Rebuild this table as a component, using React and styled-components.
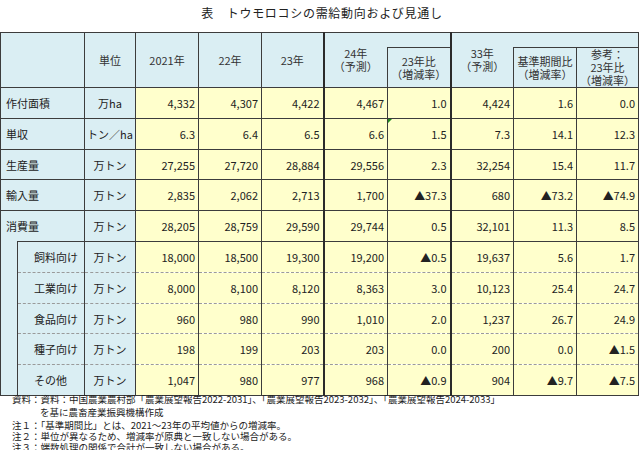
import React from 'react';
import styled, { createGlobalStyle } from 'styled-components';

const GlobalStyle = createGlobalStyle`
  html, body {
    margin: 0;
    padding: 0;
    background: #ffffff;
  }
  body {
    font-family: 'Noto Sans CJK JP', 'Noto Sans', sans-serif;
    color: #222222;
  }
`;

const line = '#3c3c3c';
const thick = '#2a2a2a';
const blue = '#daeef3';
const yellow = '#ffffcc';

const Page = styled.div`
  width: 640px;
  height: 450px;
  overflow: hidden;
`;

const Title = styled.div`
  height: 32px;
  padding-top: 6px;
  box-sizing: border-box;
  text-align: center;
  font-size: 12px;
  line-height: 14px;
  letter-spacing: 0.7px;
  padding-left: 4px;
  color: #222;
`;

const Table = styled.table`
  border-collapse: collapse;
  table-layout: fixed;
  width: 639px;
  font-size: 11px;
  line-height: 14px;
  border: 1px solid ${line};
`;

const HeadRow = styled.tr`
  height: ${p => p.$h}px;
`;

const Row = styled.tr`
  height: ${p => p.$h || 31}px;
`;

const Head = styled.th`
  background: ${blue};
  font-weight: normal;
  color: #333;
  line-height: 13px;
  text-align: center;
  padding: 0;
  border: 1px solid ${line};
  ${p => p.$open && 'border-right: none;'}
  ${p => p.$gap && 'border-left: none;'}
  ${p => p.$thick && `border-right: 2px solid ${thick};`}
`;

const subBorders = p => {
  if (p.$sub === 'first') return 'border-bottom: 1px dashed #9a9a9a;';
  if (p.$sub === 'mid') return 'border-top: 1px dashed #9a9a9a; border-bottom: 1px dashed #9a9a9a;';
  if (p.$sub === 'last') return 'border-top: 1px dashed #9a9a9a;';
  return '';
};

const Cell = styled.td`
  border: 1px solid ${line};
  padding: 0 3px;
  white-space: nowrap;
  ${subBorders}
  ${p => p.$thick && `border-right: 2px solid ${thick};`}
`;

const Label = styled(Cell)`
  background: ${blue};
  text-align: left;
  padding-left: ${p => (p.$sub ? '16px' : '5px')};
  ${p => p.$open && 'border-bottom: none;'}
`;

const Indent = styled.td`
  background: ${blue};
  border: 1px solid ${line};
  border-top: none;
  padding: 0;
`;

const Unit = styled(Cell)`
  background: ${blue};
  text-align: center;
  padding: 0;
`;

const Num = styled(Cell)`
  background: ${yellow};
  text-align: right;
  position: relative;

  ${p =>
    p.$flag &&
    `&::before {
      content: '';
      position: absolute;
      left: 0;
      top: 0;
      border-top: 4px solid #1f8a1f;
      border-right: 4px solid transparent;
    }`}
`;

const Notes = styled.div`
  margin-top: -2px;
  padding-left: 12px;
  font-size: 9.5px;
  color: #222;
`;

const NoteLine = styled.div`
  height: 11px;
  line-height: 11px;
  padding-left: ${p => (p.$indent ? '28px' : '0')};
  margin-bottom: ${p => p.$mb || 0}px;
  white-space: nowrap;
`;

const widths = [17, 67, 51, 63, 63, 62, 64, 63, 63, 63, 62];

const main = [
  { label: '作付面積', unit: '万ha', h: 31, v: ['4,332', '4,307', '4,422', '4,467', '1.0', '4,424', '1.6', '0.0'] },
  { label: '単収', unit: 'トン／ha', h: 31, v: ['6.3', '6.4', '6.5', '6.6', '1.5', '7.3', '14.1', '12.3'], flag: true },
  { label: '生産量', unit: '万トン', h: 30, v: ['27,255', '27,720', '28,884', '29,556', '2.3', '32,254', '15.4', '11.7'] },
  { label: '輸入量', unit: '万トン', h: 31, v: ['2,835', '2,062', '2,713', '1,700', '▲37.3', '680', '▲73.2', '▲74.9'] },
];

const total = { label: '消費量', unit: '万トン', h: 31, v: ['28,205', '28,759', '29,590', '29,744', '0.5', '32,101', '11.3', '8.5'] };

const subs = [
  { label: '飼料向け', h: 31, v: ['18,000', '18,500', '19,300', '19,200', '▲0.5', '19,637', '5.6', '1.7'] },
  { label: '工業向け', h: 31, v: ['8,000', '8,100', '8,120', '8,363', '3.0', '10,123', '25.4', '24.7'] },
  { label: '食品向け', h: 30, v: ['960', '980', '990', '1,010', '2.0', '1,237', '26.7', '24.9'] },
  { label: '種子向け', h: 31, v: ['198', '199', '203', '203', '0.0', '200', '0.0', '▲1.5'] },
  { label: 'その他', h: 31, v: ['1,047', '980', '977', '968', '▲0.9', '904', '▲9.7', '▲7.5'] },
];

// thick dividers after 23年 and after 23年比
const isThick = i => i === 2 || i === 4;

function Values({ v, sub, flag }) {
  return v.map((x, i) => (
    <Num key={i} $thick={isThick(i)} $sub={sub} $flag={flag && i === 4}>
      {x}
    </Num>
  ));
}

const subPos = i => (i === 0 ? 'first' : i === subs.length - 1 ? 'last' : 'mid');

export default function App() {
  return (
    <Page>
      <GlobalStyle />
      <Title>表　トウモロコシの需給動向および見通し</Title>
      <Table>
        <colgroup>
          {widths.map((w, i) => (
            <col key={i} style={{ width: w }} />
          ))}
        </colgroup>
        <thead>
          <HeadRow $h={15}>
            <Head colSpan={2} rowSpan={2} />
            <Head rowSpan={2}>単位</Head>
            <Head rowSpan={2}>2021年</Head>
            <Head rowSpan={2}>22年</Head>
            <Head rowSpan={2} $thick>23年</Head>
            <Head rowSpan={2} $open>
              24年
              <br />
              （予測）
            </Head>
            <Head $gap $thick />
            <Head rowSpan={2} $open>
              33年
              <br />
              （予測）
            </Head>
            <Head colSpan={2} $gap />
          </HeadRow>
          <HeadRow $h={37}>
            <Head $thick>
              23年比
              <br />
              （増減率）
            </Head>
            <Head>
              基準期間比
              <br />
              （増減率）
            </Head>
            <Head>
              参考：
              <br />
              23年比
              <br />
              （増減率）
            </Head>
          </HeadRow>
        </thead>
        <tbody>
          {main.map(r => (
            <Row key={r.label} $h={r.h}>
              <Label colSpan={2}>{r.label}</Label>
              <Unit>{r.unit}</Unit>
              <Values v={r.v} flag={r.flag} />
            </Row>
          ))}
          <Row $h={total.h}>
            <Label colSpan={2} $open>
              {total.label}
            </Label>
            <Unit>{total.unit}</Unit>
            <Values v={total.v} />
          </Row>
          {subs.map((r, i) => (
            <Row key={r.label} $h={r.h}>
              {i === 0 && <Indent rowSpan={subs.length} />}
              <Label $sub={subPos(i)}>{r.label}</Label>
              <Unit $sub={subPos(i)}>万トン</Unit>
              <Values v={r.v} sub={subPos(i)} />
            </Row>
          ))}
        </tbody>
      </Table>
      <Notes>
        <NoteLine $mb={2}>
          資料：資料：中国農業農村部「農業展望報告2022-2031」、「農業展望報告2023-2032」、「農業展望報告2024-2033」
        </NoteLine>
        <NoteLine $indent $mb={2}>
          を基に農畜産業振興機構作成
        </NoteLine>
        <NoteLine>注１：「基準期間比」とは、2021～23年の平均値からの増減率。</NoteLine>
        <NoteLine>注２：単位が異なるため、増減率が原典と一致しない場合がある。</NoteLine>
        <NoteLine>注３：端数処理の関係で合計が一致しない場合がある。</NoteLine>
      </Notes>
    </Page>
  );
}
